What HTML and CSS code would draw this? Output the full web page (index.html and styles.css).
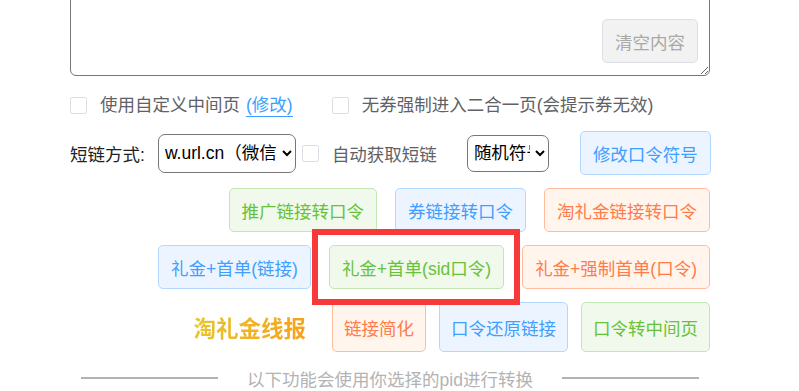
FILE: index.html
```html
<!doctype html>
<html>
<head>
<meta charset="utf-8">
<title>淘口令转换</title>
<link rel="stylesheet" href="styles.css">
</head>
<body>
	<div class="panel">
		<div class="input_box">
			<textarea class="input_text"></textarea>
			<span class="btn btn_clear">清空内容</span>
		</div>

		<div class="row row_opts">
			<label class="check"><i class="box"></i>使用自定义中间页</label>
			<a class="edit_link">(修改)</a>
			<label class="check check_force"><i class="box"></i>无券强制进入二合一页(会提示券无效)</label>
		</div>

		<div class="row row_short">
			<span class="label">短链方式:</span>
			<select class="sel sel_url">
				<option>w.url.cn（微信可用）</option>
				<option>t.cn（微博）</option>
			</select>
			<label class="check check_auto"><i class="box"></i>自动获取短链</label>
			<select class="sel sel_sign">
				<option>随机符号</option>
				<option>￥</option>
			</select>
			<span class="btn blue btn_sign">修改口令符号</span>
		</div>

		<div class="row row_btns">
			<span class="btn green">推广链接转口令</span>
			<span class="btn blue">券链接转口令</span>
			<span class="btn orange">淘礼金链接转口令</span>
		</div>

		<div class="row row_btns">
			<span class="btn blue">礼金+首单(链接)</span>
			<span class="btn green">礼金+首单(sid口令)</span>
			<span class="btn orange">礼金+强制首单(口令)</span>
		</div>

		<div class="row row_btns row_tools">
			<span class="news_title">淘礼金线报</span>
			<span class="btn orange">链接简化</span>
			<span class="btn blue">口令还原链接</span>
			<span class="btn green">口令转中间页</span>
		</div>

		<div class="divider">
			<i class="line"></i>
			<span>以下功能会使用你选择的pid进行转换</span>
			<i class="line"></i>
		</div>
	</div>

	<div class="mark_box"></div>
</body>
</html>
```

FILE: styles.css
```css
body{ margin:0; background:#fff; font-family:"Liberation Sans", "Noto Sans CJK SC", sans-serif; font-size:17.5px; color:#606266; overflow:hidden;}
.panel{ width:640px; margin-left:70px;}

.input_box{ position:relative; margin-top:-50px;}
.input_text{ display:block; width:640px; height:126px; box-sizing:border-box; border:1px solid #767676; border-radius:6px; resize:both; font-family:inherit;}
.btn_clear{ position:absolute; right:12px; bottom:13px; height:43px; padding:0 13px; background:#f2f2f2; border-color:#dedede; color:#a9a9a9;}

.row{ display:flex; align-items:center; white-space:nowrap;}
.row > *{ flex-shrink:0;}
.row_opts{ margin-top:17px; height:24px; line-height:24px;}
.row_short{ margin-top:14px; height:44px;}
.row_btns{ justify-content:flex-end; gap:18px; margin-top:13px;}
.row_tools{ gap:13px;}

.check{ display:flex; align-items:center; cursor:pointer;}
.check .box{ width:15px; height:15px; border:1px solid #dcdfe6; border-radius:2px; background:#fff; margin-right:13px;}
.edit_link{ color:#409eff; border-bottom:1px solid #409eff; line-height:22px; margin-left:6px; cursor:pointer;}
.check_force{ margin-left:39px;}

.label{ color:#222;}
.sel{ height:39px; font-family:inherit; font-size:17.5px; color:#000; background:#fff; border:1px solid #767676; border-radius:7px; padding:0 2px;}
.sel_url{ width:138px; margin-left:13px;}
.check_auto{ margin-left:6px;}
.sel_sign{ width:82px; margin-left:30px; height:37px;}
.btn_sign{ margin-left:31px;}

.btn{ display:inline-flex; align-items:center; box-sizing:border-box; height:44px; padding:0 12px; border:1px solid #dcdfe6; border-radius:5px; white-space:nowrap; cursor:pointer;}
.green{ background:#f0f9eb; border-color:#c2e7b0; color:#67c23a;}
.blue{ background:#ecf5ff; border-color:#b3d8ff; color:#409eff;}
.orange{ background:#fff5ec; border-color:#ffbd9d; color:#ff7b4a;}
.row_tools .btn{ height:50px; padding:0 11px;}

.news_title{ margin-right:13px; font-size:22.5px; font-weight:bold; background:linear-gradient(90deg, #e6c62e, #f8a11b); -webkit-background-clip:text; background-clip:text; color:transparent;}

.divider{ display:flex; align-items:center; justify-content:center; margin-top:14px; height:24px; color:#b3b3b3;}
.divider .line{ width:137px; height:2px; background:#b3b3b3;}
.divider span{ margin:0 29px;}

/* 截图标注框 */
.mark_box{ position:absolute; left:312px; top:229px; width:196px; height:64px; border:6px solid #f83939;}
```
